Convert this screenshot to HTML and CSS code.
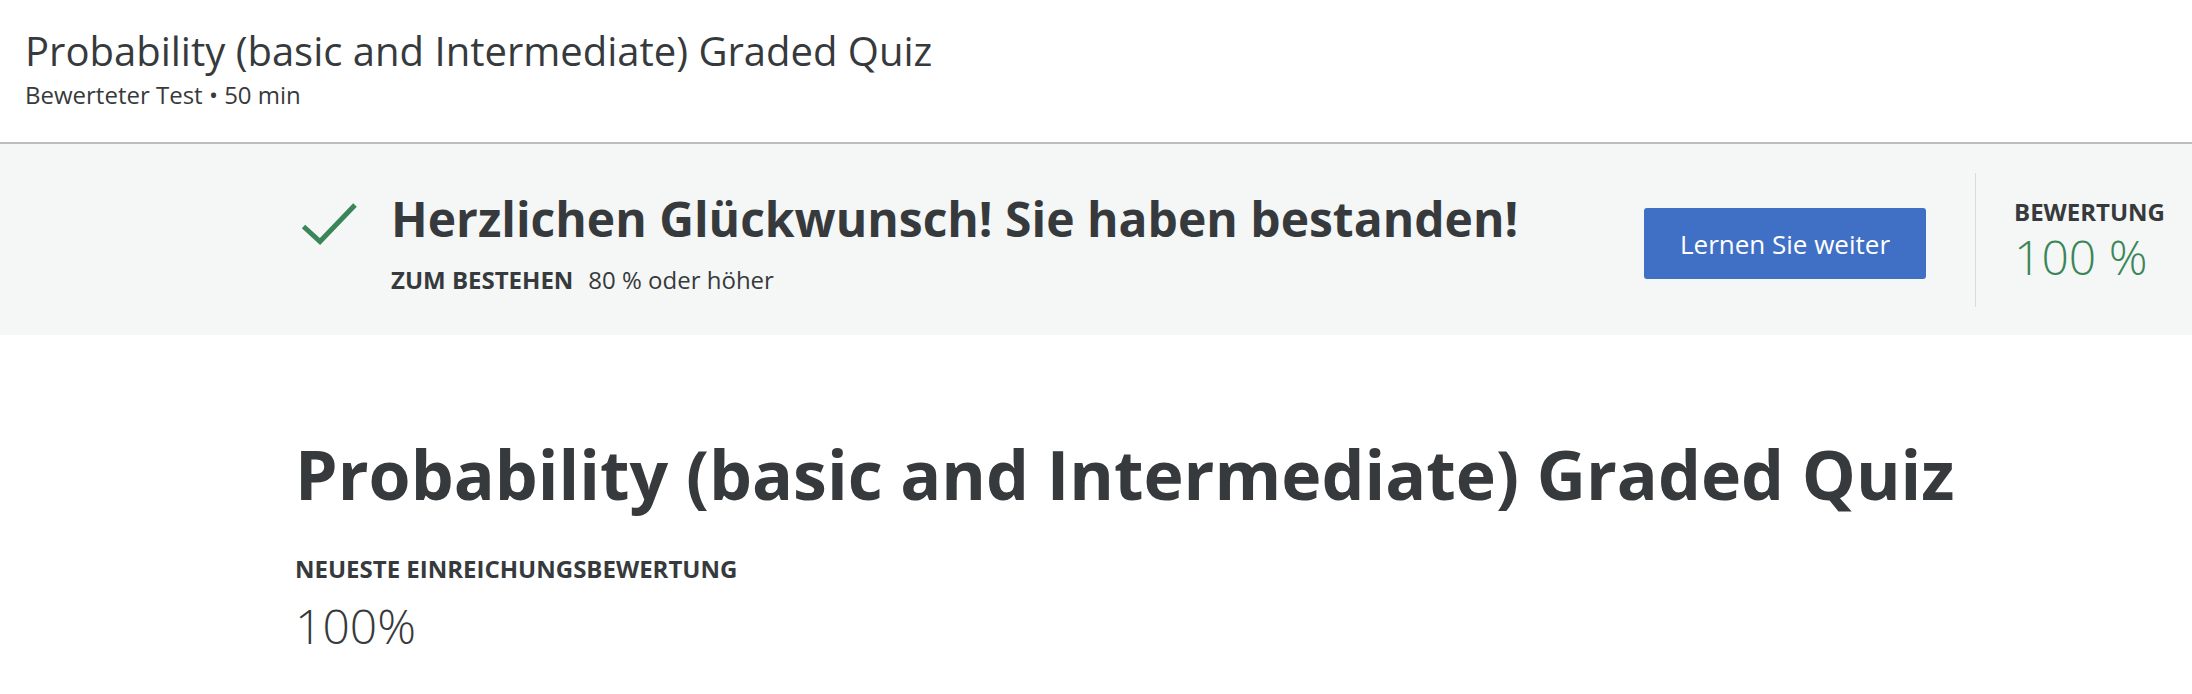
FILE: index.html
```html
<!DOCTYPE html>
<html lang="de">
<head>
<meta charset="utf-8">
<title>Probability (basic and Intermediate) Graded Quiz</title>
<link rel="stylesheet" href="styles.css">
</head>
<body>
<header class="top">
  <h1 class="top-title">Probability (basic and Intermediate) Graded Quiz</h1>
  <div class="top-sub">Bewerteter Test • 50 min</div>
</header>
<section class="banner">
  <svg class="check" width="58" height="46" viewBox="0 0 58 46" aria-hidden="true">
    <path d="M3.5 26.5 L20 41.5 L55 5" fill="none" stroke="#3b8658" stroke-width="5"/>
  </svg>
  <div class="banner-text">
    <div class="banner-head">Herzlichen Glückwunsch! Sie haben bestanden!</div>
    <div class="banner-req"><span class="req-label">ZUM BESTEHEN</span><span class="req-val">80 % oder höher</span></div>
  </div>
  <button class="btn">Lernen Sie weiter</button>
  <div class="divider"></div>
  <div class="score">
    <div class="score-label">BEWERTUNG</div>
    <div class="score-val">100 %</div>
  </div>
</section>
<main class="main">
  <h2 class="main-title">Probability (basic and Intermediate) Graded Quiz</h2>
  <div class="latest-label">NEUESTE EINREICHUNGSBEWERTUNG</div>
  <div class="latest-val">100%</div>
</main>
</body>
</html>
```
FILE: styles.css
```css
html, body {
  margin: 0;
  padding: 0;
  background: #ffffff;
}
body {
  font-family: "Open Sans", "Noto Sans", sans-serif;
  color: #373a3c;
}
.top {
  padding: 24px 25px 32px 25px;
  border-bottom: 2px solid #bdbdbd;
}
.top-title {
  margin: 0;
  font-size: 40px;
  line-height: 54px;
  font-weight: 400;
}
.top-sub {
  margin-top: 2px;
  font-size: 24px;
  line-height: 30px;
}
.banner {
  display: flex;
  align-items: flex-start;
  background: #f4f7f6;
  padding: 29px 27px 28px 295px;
}
.check {
  margin-left: 5px;
  margin-top: 27px;
  flex: none;
}
.banner-text {
  margin-left: 33px;
  margin-top: 18px;
}
.banner-head {
  font-size: 48px;
  line-height: 56px;
  font-weight: 700;
  white-space: nowrap;
}
.banner-req {
  margin-top: 17px;
  font-size: 24px;
  line-height: 32px;
  white-space: nowrap;
}
.req-label {
  font-weight: 700;
  margin-right: 15px;
}
.btn {
  margin-left: auto;
  margin-top: 35px;
  width: 282px;
  height: 71px;
  border: none;
  border-radius: 3px;
  background: #4070c6;
  color: #ffffff;
  font-family: "Open Sans", "Noto Sans", sans-serif;
  font-size: 26px;
  font-weight: 400;
  padding: 0;
  flex: none;
}
.divider {
  margin-left: 49px;
  width: 1px;
  height: 134px;
  background: #dadada;
  flex: none;
}
.score {
  margin-left: 38px;
  margin-top: 23px;
  flex: none;
}
.score-label {
  font-size: 24px;
  line-height: 32px;
  font-weight: 700;
}
.score-val {
  margin-top: 1px;
  font-size: 48px;
  line-height: 56px;
  font-weight: 300;
  color: #3b8658;
}
.main {
  padding: 97px 0 0 295px;
}
.main-title {
  margin: 0;
  font-size: 68px;
  line-height: 84px;
  font-weight: 700;
}
.latest-label {
  margin-top: 37px;
  font-size: 24px;
  line-height: 32px;
  font-weight: 700;
}
.latest-val {
  margin-top: 13px;
  font-size: 48px;
  line-height: 56px;
  font-weight: 300;
}
```
